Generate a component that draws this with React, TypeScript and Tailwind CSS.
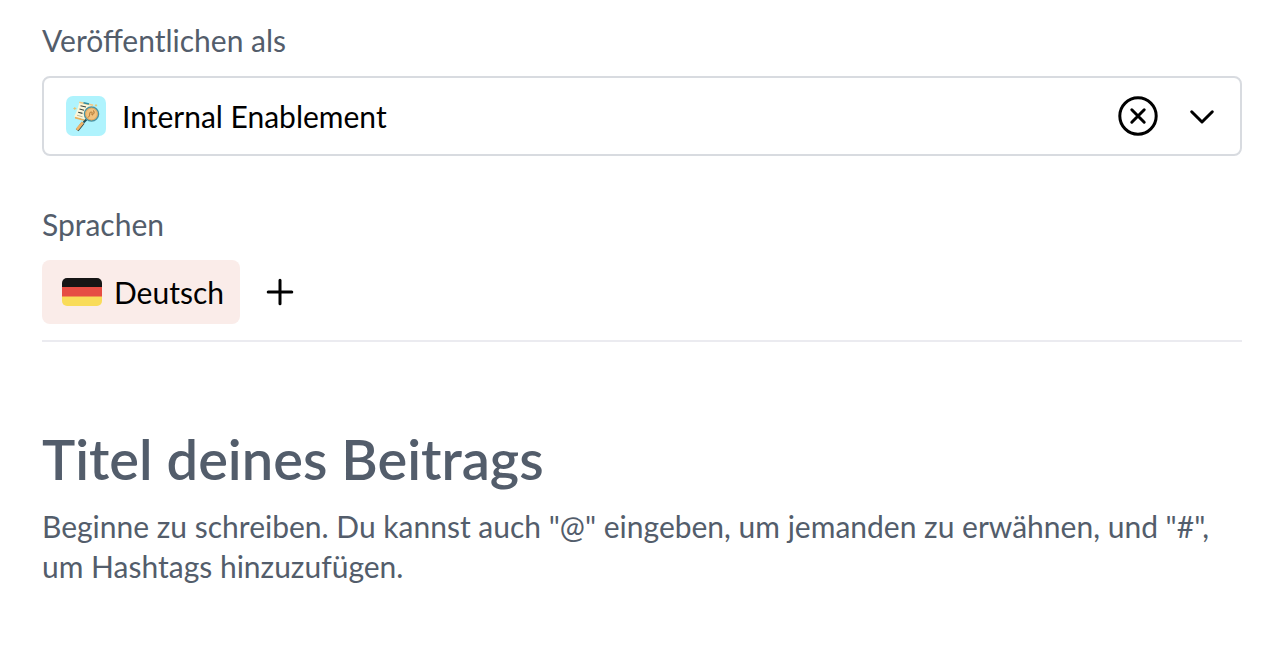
import React, { useState } from 'react';

const GermanFlag = () => (
  <svg viewBox="0 0 40 28" className="w-10 h-7 shrink-0" aria-hidden="true">
    <clipPath id="flag-de">
      <rect width="40" height="28" rx="5" />
    </clipPath>
    <g clipPath="url(#flag-de)">
      <rect width="40" height="10" fill="#151515" />
      <rect y="9" width="40" height="10" fill="#e64d44" />
      <rect y="18.5" width="40" height="9.5" fill="#f9dc59" />
    </g>
  </svg>
);

// Document with a magnifying glass in front of it
const ChannelIcon = () => (
  <svg viewBox="0 0 40 40" className="w-10 h-10 shrink-0" aria-hidden="true">
    <rect width="40" height="40" rx="7" fill="#aff3fd" />
    <path d="M9 20 L20 24 L18.5 25 L9 22.5 Z" fill="#e9ae5c" />
    <path d="M13.5 5.5 L27.5 8.5 L22 24 L8 20.5 Q11.5 15 13.5 5.5 Z" fill="#fbf6da" />
    <path d="M13.5 5.5 L27.5 8.5 L27 10 L13 7 Z" fill="#e9c88a" />
    <path d="M17.5 6.8 L23 8" stroke="#2f8fa5" strokeWidth="1.6" />
    <path d="M14.5 9.8 L20 11 M13.5 13 L18 14.2 M12.2 16.2 L16.5 17.4" stroke="#3a4440" strokeWidth="1.1" />
    <path d="M11 19.2 L16.5 20.8" stroke="#a9a98f" strokeWidth="0.8" />
    <path d="M8.8 11 V14 M7.3 12.5 H10.3 M30 8.2 V10.6 M28.8 9.4 H31.2" stroke="#e8c36c" strokeWidth="0.9" />
    <path d="M20.5 23.5 L17.5 26.5" stroke="#1f4c55" strokeWidth="2" />
    <path d="M17.2 26.8 L11.2 34.2" stroke="#2b4a52" strokeWidth="3.4" />
    <path d="M16.8 26.4 L10.8 33.8" stroke="#f0b468" strokeWidth="2.8" />
    <circle cx="25.5" cy="18" r="7" fill="#f2c27e" stroke="#4a93a3" strokeWidth="1.5" />
    <circle cx="25.5" cy="18" r="5.9" fill="none" stroke="#dda055" strokeWidth="0.8" />
    <path d="M22 21.5 C25 19 22.5 16.5 25 16 C27.5 15.5 24.5 20.5 27 18.5 C28.5 17 28.5 15 27 14.5" fill="none" stroke="#a9702f" strokeWidth="1" />
  </svg>
);

const App = () => {
  const [channel, setChannel] = useState('Internal Enablement');
  const [title, setTitle] = useState('');
  const [body, setBody] = useState('');

  return (
    <main className="min-h-screen bg-white pl-[42px] pr-[34px] pt-5 font-['Lato',sans-serif] text-[30px] leading-10 text-[#535d6b]">
      <label htmlFor="channel" className="block">Veröffentlichen als</label>
      <div className="mt-4 flex h-20 items-center rounded-lg border-2 border-[#d8dbe0] px-[22px] text-black">
        {channel && <ChannelIcon />}
        <select
          id="channel"
          className="ml-4 min-w-0 flex-1 appearance-none bg-transparent outline-none"
          value={channel}
          onChange={e => setChannel(e.target.value)}
        >
          <option value=""></option>
          <option value="Internal Enablement">Internal Enablement</option>
        </select>
        <button type="button" aria-label="Auswahl löschen" onClick={() => setChannel('')}>
          <svg viewBox="0 0 40 40" className="w-10 h-10" fill="none" stroke="currentColor" strokeWidth="3" strokeLinecap="round">
            <circle cx="20" cy="20" r="18.2" />
            <path d="M13.8 13.8 L26.2 26.2 M26.2 13.8 L13.8 26.2" />
          </svg>
        </button>
        <svg viewBox="0 0 32 32" className="ml-7 w-8 h-8 shrink-0" fill="none" stroke="currentColor" strokeWidth="3" strokeLinecap="round" strokeLinejoin="round" aria-hidden="true">
          <path d="M5.7 11.8 L16 22 L26.3 11.8" />
        </svg>
      </div>

      <h2 className="mt-12">Sprachen</h2>
      <div className="mt-4 flex items-center gap-6 border-b-2 border-[#ebebf0] pb-4">
        <button type="button" className="flex h-16 items-center gap-3 rounded-lg bg-[#faece9] pl-5 pr-4 text-black">
          <GermanFlag />
          Deutsch
        </button>
        <button type="button" aria-label="Sprache hinzufügen" className="text-black">
          <svg viewBox="0 0 32 32" className="w-8 h-8" fill="none" stroke="currentColor" strokeWidth="3" strokeLinecap="round">
            <path d="M16 4.2 V27.8 M4.2 16 H27.8" />
          </svg>
        </button>
      </div>

      <input
        aria-label="Titel"
        className="mt-20 block w-full text-[56px] leading-[74px] font-semibold outline-none placeholder:text-[#535d6b]"
        placeholder="Titel deines Beitrags"
        value={title}
        onChange={e => setTitle(e.target.value)}
      />
      <textarea
        aria-label="Beitrag"
        rows={2}
        className="mt-2.5 block w-full resize-none outline-none placeholder:text-[#535d6b]"
        placeholder={'Beginne zu schreiben. Du kannst auch "@" eingeben, um jemanden zu erwähnen, und "#", um Hashtags hinzuzufügen.'}
        value={body}
        onChange={e => setBody(e.target.value)}
      />
    </main>
  );
};

export default App;
